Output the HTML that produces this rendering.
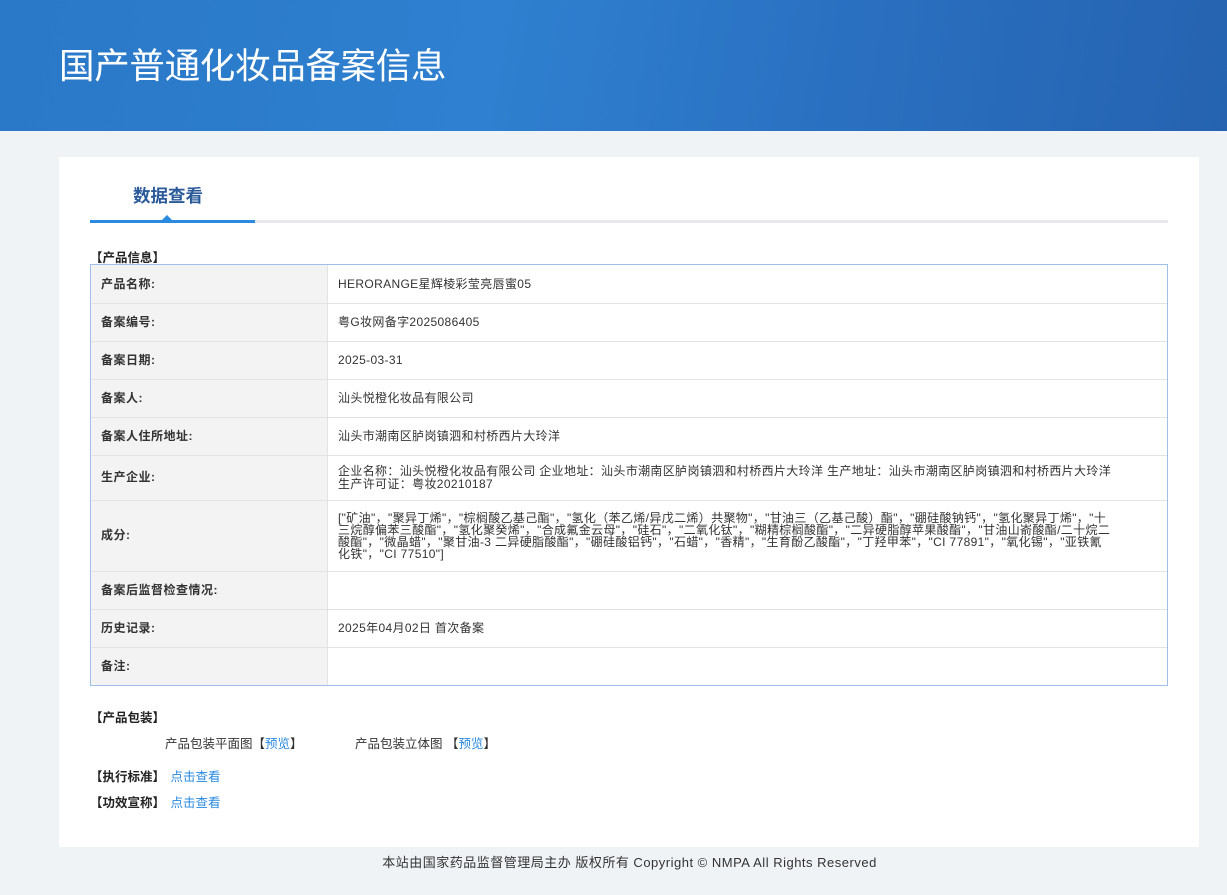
<!DOCTYPE html>
<html><head><meta charset="utf-8"><style>
body{margin:0;width:1227px;height:895px;background:#eff3f6;font-family:"Liberation Sans","Noto Sans CJK SC",sans-serif;color:#333;position:relative;overflow:hidden}
.hd{position:absolute;left:0;top:0;width:1227px;height:131px;background:linear-gradient(100deg,#2a78c8 0%,#2f80d0 40%,#2a6fc0 70%,#2563b0 100%)}
.hd h1{position:absolute;left:59px;top:38px;margin:0;font-weight:normal;font-size:35.5px;color:#fff;font-family:"Noto Sans CJK SC",sans-serif;letter-spacing:-0.3px}
.card{position:absolute;left:59px;top:157px;width:1140px;height:690px;background:#fff}
.tab{position:absolute;left:74px;top:26px;font-size:17.5px;font-weight:bold;color:#2a5a9a}
.line{position:absolute;left:31px;top:63px;width:1078px;height:3px;background:#e6e8eb}
.line2{position:absolute;left:31px;top:63px;width:165px;height:3px;background:#2a8ae0}
.tri{position:absolute;left:102px;top:58px;width:0;height:0;border-left:6px solid transparent;border-right:6px solid transparent;border-bottom:6px solid #2a8ae0}
.sec{position:absolute;font-size:12.5px;font-weight:bold;color:#222}
.tw{position:absolute;left:31px;top:107px;width:1076px;border:1px solid #9fc0ea}
table{width:100%;border-collapse:collapse;font-size:12px}
td{border:1px solid #e3e3e3;padding:0 10px;line-height:12.5px;letter-spacing:0.35px}
tr:first-child td{border-top:0}tr:last-child td{border-bottom:0}
td:first-child{border-left:0}td:last-child{border-right:0}
td.l{width:216px;background:#f3f3f3;font-weight:bold;color:#333;letter-spacing:0.5px}
.a{color:#2a8ae0}
.ft{position:absolute;top:852px;left:16px;width:1227px;text-align:center;font-size:13px;color:#333;letter-spacing:0.5px}
</style></head><body>
<div class="hd"><h1>国产普通化妆品备案信息</h1></div>
<div class="card">
<div class="tab">数据查看</div>
<div class="line"></div><div class="line2"></div><div class="tri"></div>
<div class="sec" style="left:31px;top:90px">【产品信息】</div>
<div class="tw"><table>
<tr style="height:38px"><td class="l">产品名称:</td><td>HERORANGE星辉棱彩莹亮唇蜜05</td></tr>
<tr style="height:38px"><td class="l">备案编号:</td><td>粤G妆网备字2025086405</td></tr>
<tr style="height:38px"><td class="l">备案日期:</td><td>2025-03-31</td></tr>
<tr style="height:38px"><td class="l">备案人:</td><td>汕头悦橙化妆品有限公司</td></tr>
<tr style="height:38px"><td class="l">备案人住所地址:</td><td>汕头市潮南区胪岗镇泗和村桥西片大玲洋</td></tr>
<tr style="height:45px"><td class="l">生产企业:</td><td style="padding-right:55px">企业名称：汕头悦橙化妆品有限公司 企业地址：汕头市潮南区胪岗镇泗和村桥西片大玲洋 生产地址：汕头市潮南区胪岗镇泗和村桥西片大玲洋 生产许可证：粤妆20210187</td></tr>
<tr style="height:71px"><td class="l">成分:</td><td style="padding-right:55px;line-height:12px">["矿油"，"聚异丁烯"，"棕榈酸乙基己酯"，"氢化（苯乙烯/异戊二烯）共聚物"，"甘油三（乙基己酸）酯"，"硼硅酸钠钙"，"氢化聚异丁烯"，"十三烷醇偏苯三酸酯"，"氢化聚癸烯"，"合成氟金云母"，"硅石"，"二氧化钛"，"糊精棕榈酸酯"，"二异硬脂醇苹果酸酯"，"甘油山嵛酸酯/二十烷二酸酯"，"微晶蜡"，"聚甘油-3 二异硬脂酸酯"，"硼硅酸铝钙"，"石蜡"，"香精"，"生育酚乙酸酯"，"丁羟甲苯"，"CI 77891"，"氧化锡"，"亚铁氰化铁"，"CI 77510"]</td></tr>
<tr style="height:38px"><td class="l">备案后监督检查情况:</td><td></td></tr>
<tr style="height:38px"><td class="l">历史记录:</td><td>2025年04月02日 首次备案</td></tr>
<tr style="height:38px"><td class="l">备注:</td><td></td></tr>
</table></div>
<div class="sec" style="left:31px;top:550px">【产品包装】</div>
<div style="position:absolute;left:106px;top:576px;font-size:12.5px">产品包装平面图【<span class="a">预览</span>】</div>
<div style="position:absolute;left:296px;top:576px;font-size:12.5px">产品包装立体图 【<span class="a">预览</span>】</div>
<div class="sec" style="left:31px;top:609px">【执行标准】 <span class="a" style="font-weight:normal;margin-left:2px">点击查看</span></div>
<div class="sec" style="left:31px;top:635px">【功效宣称】 <span class="a" style="font-weight:normal;margin-left:2px">点击查看</span></div>
</div>
<div class="ft">本站由国家药品监督管理局主办 版权所有 Copyright © NMPA All Rights Reserved</div>
</body></html>
